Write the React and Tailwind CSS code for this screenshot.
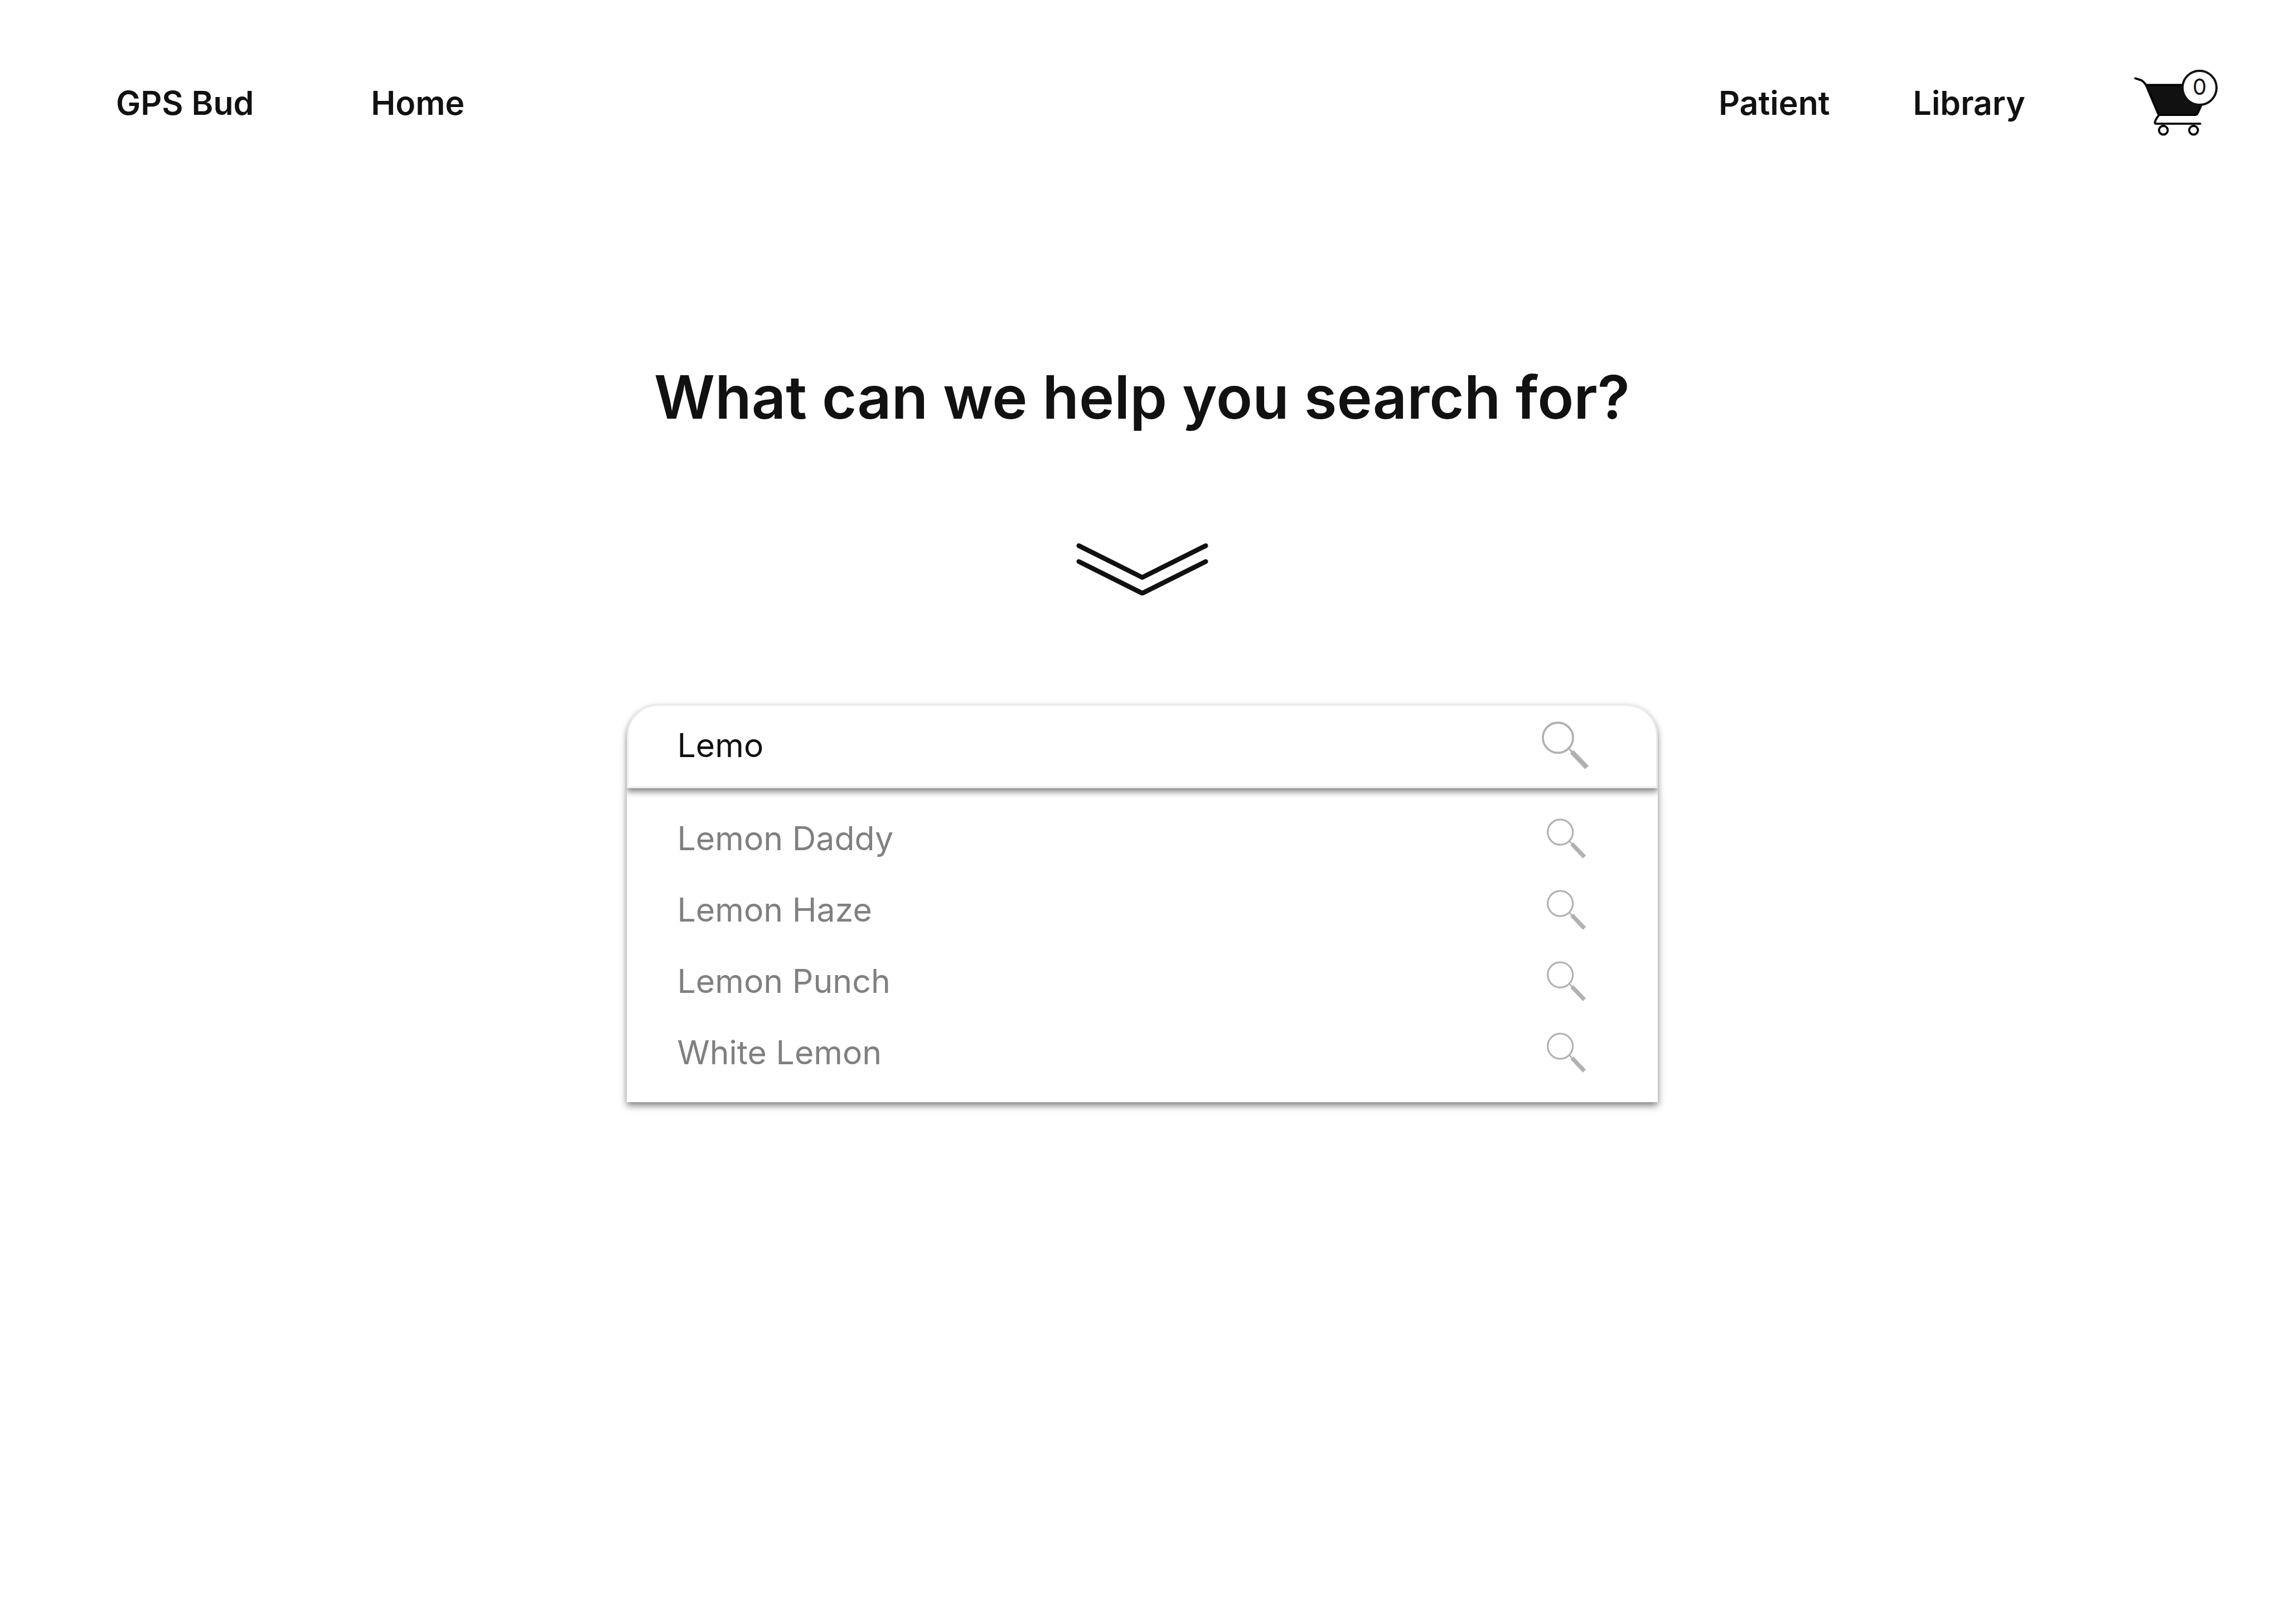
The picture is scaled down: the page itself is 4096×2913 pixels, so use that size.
import { useState } from "react";

const strains = ["Lemon Daddy", "Lemon Haze", "Lemon Punch", "White Lemon"];

function NavLink({ children }) {
  return (
    <a href="#" className="whitespace-nowrap">
      {children}
    </a>
  );
}

function Magnifier({ className }) {
  return (
    <svg viewBox="0 0 267 273" fill="none" stroke="#b1b1b1" className={className} aria-hidden="true">
      <circle cx="92" cy="93" r="86" strokeWidth="12" />
      <path d="M153 153 L176 177" strokeWidth="10" />
      <path d="M171 173 L257 263" strokeWidth="28" />
    </svg>
  );
}

function Cart() {
  return (
    <svg
      viewBox="108 96 474 378"
      fill="none"
      stroke="#000"
      strokeWidth="12"
      strokeLinecap="round"
      strokeLinejoin="round"
      className="h-[119px] w-[150px]"
      aria-hidden="true"
    >
      <path
        d="M175 183 H542 L470 343 Q465 353 456 354 H262 Q248 354 243 344 Z"
        fill="#111"
      />
      <path d="M114 145 L148 156 C160 161 166 172 175 183" />
      <path d="M248 355 C234 373 227 386 226 397 Q226 404 232 404 H484" />
      <circle cx="274" cy="441" r="25" />
      <circle cx="446" cy="441" r="25" />
    </svg>
  );
}

function DoubleChevron() {
  return (
    <svg
      viewBox="0 0 250 99"
      fill="none"
      stroke="#111"
      strokeWidth="9"
      strokeLinecap="round"
      strokeLinejoin="round"
      className="mt-[198px] h-[94px] w-[237px]"
      aria-hidden="true"
    >
      <path d="M5 5 L125 65 L245 5" />
      <path d="M5 35 L125 95 L245 35" />
    </svg>
  );
}

export default function App() {
  const [query, setQuery] = useState("Lemo");

  return (
    <div className="min-h-screen bg-white font-['Inter',sans-serif] text-[59px] leading-[72px] text-[#111]">
      <header className="flex items-center justify-between pt-[125px] pr-[119px] pl-[208px] font-semibold">
        <nav aria-label="Main" className="flex gap-[210px]">
          <NavLink>GPS Bud</NavLink>
          <NavLink>Home</NavLink>
        </nav>
        <div className="flex items-center gap-[195px]">
          <nav aria-label="Account" className="flex gap-[149px]">
            <NavLink>Patient</NavLink>
            <NavLink>Library</NavLink>
          </nav>
          <button type="button" aria-label="Cart" className="relative">
            <Cart />
            <span className="absolute top-0 right-0 flex size-[65px] items-center justify-center rounded-full border-4 border-[#111] bg-white pb-1 text-[40px] leading-none font-normal">
              0
            </span>
          </button>
        </div>
      </header>

      <main className="flex flex-col items-center">
        <h1 className="mt-[404px] text-[107px] leading-[128px] font-semibold">
          What can we help you search for?
        </h1>

        <DoubleChevron />

        <form
          role="search"
          onSubmit={(e) => e.preventDefault()}
          className="mt-[195px] w-full max-w-[1849px]"
        >
          <div className="relative z-10 flex h-[151px] items-center rounded-t-[57px] border-3 border-[#ebebeb] bg-white pr-[121px] pb-1 pl-[88px] shadow-[0_6px_12px_rgba(0,0,0,0.5)]">
            <input
              type="text"
              aria-label="Search"
              value={query}
              onChange={(e) => setQuery(e.target.value)}
              className="min-w-0 flex-1 bg-transparent outline-none"
            />
            <button type="submit" aria-label="Submit search">
              <Magnifier className="h-[86px] w-[84px]" />
            </button>
          </div>

          <ul className="bg-white pt-[26px] pb-[25px] text-[#808080] shadow-[0_6px_12px_rgba(0,0,0,0.5)]">
            {strains.map((name) => (
              <li key={name}>
                <button
                  type="button"
                  onClick={() => setQuery(name)}
                  className="flex h-32 w-full items-center justify-between pr-[122px] pl-[91px] text-left"
                >
                  {name}
                  <span className="flex w-[84px] justify-center">
                    <Magnifier className="h-[72px] w-[70px]" />
                  </span>
                </button>
              </li>
            ))}
          </ul>
        </form>
      </main>
    </div>
  );
}
